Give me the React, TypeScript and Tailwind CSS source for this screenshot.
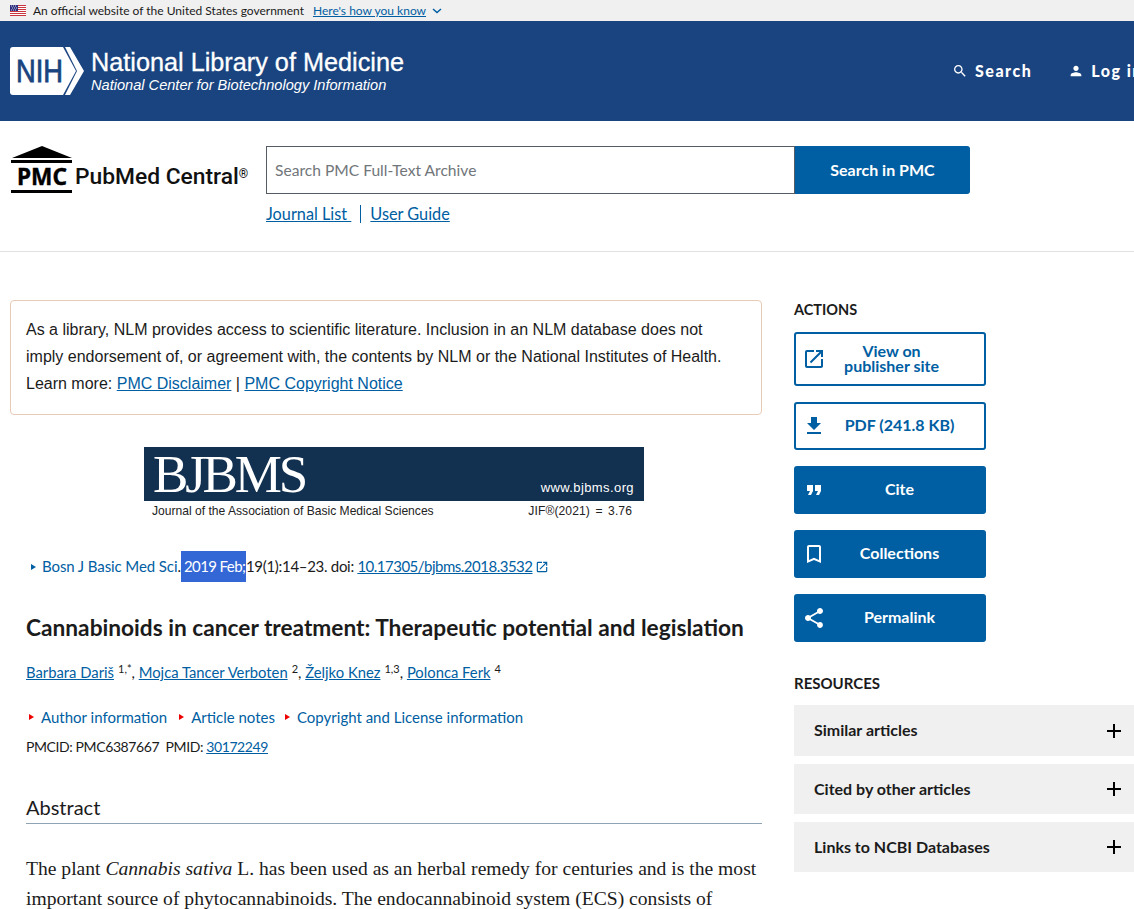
const sans = "font-['Lato',sans-serif]";

function Flag() {
  return (
    <svg width="16" height="11" viewBox="0 0 16 11" className="shrink-0">
      <rect width="16" height="11" fill="#fff" />
      <path d="M0 .5h16M0 2.5h16M0 4.5h16M0 6.5h16M0 8.5h16M0 10.5h16" stroke="#c8353f" strokeWidth="1" />
      <rect width="8" height="6" fill="#2d2f7f" />
      <path d="M1 1h1M3 1h1M5 1h1M2 3h1M4 3h1M6 3h1M1 5h1M3 5h1M5 5h1" stroke="#fff" strokeWidth=".8" />
    </svg>
  );
}

function NihLogo() {
  return (
    <svg width="74" height="48" viewBox="0 0 74 48" className="shrink-0">
      <path d="M3 0h50l13 24-13 24H3a3 3 0 0 1-3-3V3a3 3 0 0 1 3-3z" fill="#fff" />
      <path d="M55 0h5l14 24-14 24h-5l12-24z" fill="#fff" />
      <text x="6" y="35" fontSize="31" fontFamily="Liberation Sans" stroke="#1a4480" strokeWidth=".8" fill="#1a4480" textLength="47" lengthAdjust="spacingAndGlyphs">
        NIH
      </text>
    </svg>
  );
}

function PmcLogo() {
  return (
    <svg width="64" height="48" viewBox="0 0 64 48" className="shrink-0">
      <path d="M32 0 62 12H2z" fill="#000" />
      <rect x="1" y="14" width="61" height="3" fill="#000" />
      <text x="7" y="39" fontSize="24" fontWeight="700" fontFamily="Noto Sans" stroke="#000" strokeWidth=".4" fill="#000" textLength="50" lengthAdjust="spacingAndGlyphs">
        PMC
      </text>
      <rect x="1" y="44" width="61" height="3" fill="#000" />
    </svg>
  );
}

// material-style icons, 24 unit box
function Icon({ d, size = 24, className }: { d: string; size?: number; className?: string }) {
  return (
    <svg width={size} height={size} viewBox="0 0 24 24" fill="currentColor" className={className}>
      <path d={d} />
    </svg>
  );
}

const launch = "M19 19H5V5h7V3H5a2 2 0 0 0-2 2v14a2 2 0 0 0 2 2h14c1.100 0 2-.9 2-2v-7h-2v7zM14 3v2h3.590l-9.830 9.830 1.410 1.410L19 6.410V10h2V3h-7z";
const download = "M19 9h-4V3H9v6H5l7 7 7-7zM5 18v2h14v-2H5z";
const quote = "M6 17h3l2-4V7H5v6h3zm8 0h3l2-4V7h-6v6h3z";
const bookmark = "M17 3H7c-1.100 0-1.990.9-1.990 2L5 21l7-3 7 3V5c0-1.100-.9-2-2-2zm0 15-5-2.180L7 18V5h10v13z";
const share = "M18 16.080c-.76 0-1.440.3-1.960.77L8.910 12.700c.05-.23.09-.46.09-.7s-.04-.47-.09-.7l7.050-4.110c.54.5 1.250.81 2.040.81 1.660 0 3-1.340 3-3s-1.340-3-3-3-3 1.340-3 3c0 .24.040.47.090.7L8.040 9.810C7.500 9.310 6.790 9 6 9c-1.660 0-3 1.340-3 3s1.340 3 3 3c.79 0 1.500-.31 2.040-.81l7.120 4.160c-.05.21-.08.43-.08.65 0 1.610 1.310 2.920 2.920 2.920 1.610 0 2.920-1.310 2.920-2.920s-1.310-2.920-2.920-2.920z";
const search = "M15.500 14h-.79l-.28-.27C15.410 12.590 16 11.110 16 9.500 16 5.910 13.090 3 9.500 3S3 5.910 3 9.500 5.910 16 9.500 16c1.610 0 3.090-.59 4.230-1.570l.27.28v.79l5 4.990L20.490 19l-4.990-5zm-6 0C7.010 14 5 11.990 5 9.500S7.010 5 9.500 5 14 7.010 14 9.500 11.990 14 9.500 14z";
const person = "M12 12c2.210 0 4-1.790 4-4s-1.790-4-4-4-4 1.790-4 4 1.790 4 4 4zm0 2c-2.670 0-8 1.340-8 4v2h16v-2c0-2.660-5.330-4-8-4z";

function ActionButton({ icon, label, filled, tall }: { icon: string; label: React.ReactNode; filled?: boolean; tall?: boolean }) {
  return (
    <div
      className={`flex w-[192px] items-center rounded-[3px] border-2 border-[#005ea2] pl-[6px] text-[16px] font-bold leading-[15px] ${
        tall ? "h-[54px] pr-[27px]" : "h-[48px] pr-[11px]"
      } ${filled ? "bg-[#005ea2] text-white" : "bg-white text-[#005ea2]"}`}
    >
      <Icon d={icon} className="shrink-0" />
      <span className={`flex-1 text-center ${tall ? "pb-[2px]" : "pb-[4px]"}`}>{label}</span>
    </div>
  );
}

function Accordion({ label, tall }: { label: string; tall?: boolean }) {
  return (
    <div className={`flex items-center justify-between bg-[#f0f0f0] pl-[20px] pr-[8px] text-[16px] font-bold text-[#1b1b1b] ${tall ? "h-[51px]" : "h-[50px]"}`}>
      <span className={tall ? "pb-[2px]" : ""}>{label}</span>
      <svg width="24" height="24" viewBox="0 0 24 24" fill="#000">
        <path d="M19 13h-6v6h-2v-6H5v-2h6V5h2v6h6v2z" />
      </svg>
    </div>
  );
}

function RedLink({ label, className }: { label: string; className?: string }) {
  return (
    <span className={`flex items-center gap-[7px] ${className ?? ""}`}>
      <span className="h-0 w-0 border-y-[3px] border-l-[5px] border-y-transparent border-l-[#e00]" />
      <span className="text-[#005ea2]">{label}</span>
    </span>
  );
}

export default function App() {
  return (
    <div className={`h-[909px] w-[1134px] overflow-hidden bg-white text-[#1b1b1b] ${sans}`}>
      {/* Gov banner */}
      <div className="flex h-[21px] items-center bg-[#f0f0f0] pl-[10px] text-[12px]">
        <Flag />
        <span className="ml-[7px]">An official website of the United States government</span>
        <span className="ml-[9px] text-[#005ea2] underline">Here's how you know</span>
        <svg width="10" height="6" viewBox="0 0 10 6" className="ml-[6px]" fill="none" stroke="#005ea2" strokeWidth="1.500">
          <path d="m1 1 4 3.500L9 1" />
        </svg>
      </div>

      {/* NLM header */}
      <header className="flex h-[100px] items-center bg-[#1a4480] pl-[10px] text-white">
        <NihLogo />
        <div className="ml-[7px] w-[400px] shrink-0 pb-[1px] font-['Liberation_Sans',sans-serif]">
          <div className="text-[25.250px] leading-[30px] [-webkit-text-stroke:0.3px_white]">National Library of Medicine</div>
          <div className="text-[14.600px] italic leading-[17px]">National Center for Biotechnology Information</div>
        </div>
        <nav className="ml-[461px] flex shrink-0 items-center text-[16px] font-black tracking-[1.500px]">
          <Icon d={search} size={16} />
          <span className="ml-[7px]">Search</span>
          <Icon d={person} size={16} className="ml-[36px]" />
          <span className="ml-[7px] whitespace-nowrap">Log in</span>
        </nav>
      </header>

      {/* PMC search */}
      <div className="flex h-[131px] border-b border-[#dfe1e2] pl-[10px] pt-[25px]">
        <div className="flex h-[48px] w-[256px] items-center">
          <PmcLogo />
          <span className="ml-[1px] mt-[14px] whitespace-nowrap font-['Roboto',sans-serif] text-[22.800px] font-medium leading-none text-[#111]">
            PubMed Central<sup className="text-[12px]">®</sup>
          </span>
        </div>
        <div>
          <div className="flex h-[48px] w-[704px]">
            <div className="flex w-[529px] items-center border border-[#565c65] pl-[8px] pt-[1px] text-[15.600px] text-[#71767a]">
              Search PMC Full-Text Archive
            </div>
            <div className="flex flex-1 items-center justify-center rounded-r-[3px] bg-[#005ea2] pb-[1px] text-[16px] font-bold text-white">
              Search in PMC
            </div>
          </div>
          <div className="mt-[9px] flex items-center text-[16.300px] leading-[22px] text-[#005ea2]">
            <span className="underline">Journal List&nbsp;</span>
            <span className="mx-[9px] h-[18px] w-px bg-[#005ea2]" />
            <span className="underline">User Guide</span>
          </div>
        </div>
      </div>

      <div className="flex pl-[10px] pt-[48px]">
        {/* Article column */}
        <main className="w-[752px] shrink-0">
          <div className="h-[115px] rounded-[4px] border border-[#e8cbb6] bg-white pl-[15px] pr-[16px] pt-[15px] font-['Liberation_Sans',sans-serif] text-[16px] leading-[27px] text-[#1b1b1b]">
            <p className="whitespace-pre-line">
              As a library, NLM provides access to scientific literature. Inclusion in an NLM database does not{"\n"}imply endorsement of, or agreement with, the contents by NLM or the National Institutes of Health.{"\n"}Learn more: <span className="text-[#005ea2] underline">PMC Disclaimer</span> | <span className="text-[#005ea2] underline">PMC Copyright Notice</span>
            </p>
          </div>

          {/* Journal banner */}
          <div className="ml-[134px] mt-[32px] w-[500px] font-['Liberation_Sans',sans-serif]">
            <div className="flex h-[54px] items-end justify-between bg-[#12304f] pl-[9px] pr-[10px] text-white">
              <span className="font-['Liberation_Serif',serif] text-[53px] leading-[54px] tracking-[-3.200px]">BJBMS</span>
              <span className="pb-[7px] text-[13px] leading-none tracking-[.4px]">www.bjbms.org</span>
            </div>
            <div className="mt-[3px] flex justify-between pl-[8px] pr-[12px] text-[12.100px] leading-[14px] text-[#222]">
              <span>Journal of the Association of Basic Medical Sciences</span>
              <span className="[word-spacing:2px] tracking-[.1px]">JIF®(2021) = 3.76</span>
            </div>
          </div>

          {/* Citation */}
          <div className="mt-[33px] flex h-[31px] items-center whitespace-nowrap pl-[21px] text-[15px]">
            <span className="mr-[6px] h-0 w-0 border-y-[3px] border-l-[5px] border-y-transparent border-l-[#005ea2]" />
            <span className="tracking-[-.1px] text-[#005ea2]">Bosn J Basic Med Sci</span>.
            <span className="flex h-[31px] w-[65px] items-center bg-[#3367d6] pl-[3px] tracking-[-.6px] text-white">2019 Feb;</span>
            <span className="tracking-[-.3px]">19(1):14–23. doi:&nbsp;</span>
            <span className="tracking-[-.5px] text-[#005ea2] underline">10.17305/bjbms.2018.3532</span>
            <Icon d={launch} size={14} className="ml-[2px] text-[#005ea2]" />
          </div>

          <h1 className="ml-[16px] mt-[29px] whitespace-nowrap text-[22.700px] font-bold leading-[34px]">
            Cannabinoids in cancer treatment: Therapeutic potential and legislation
          </h1>

          <div className="ml-[16px] mt-[16px] text-[14.800px] leading-[22px]">
            <span className="text-[#005ea2] underline">Barbara Dariš</span>
            <sup className="ml-[4px] text-[11px]">1,*</sup>, <span className="text-[#005ea2] underline">Mojca Tancer Verboten</span>
            <sup className="ml-[4px] text-[11px]">2</sup>, <span className="text-[#005ea2] underline">Željko Knez</span>
            <sup className="ml-[4px] text-[11px]">1,3</sup>, <span className="text-[#005ea2] underline">Polonca Ferk</span>
            <sup className="ml-[4px] text-[11px]">4</sup>
          </div>

          <div className="ml-[19px] mt-[23px] flex gap-[10px] text-[15px] leading-[22px]">
            <RedLink label="Author information" />
            <RedLink label="Article notes" className="ml-[2px]" />
            <RedLink label="Copyright and License information" />
          </div>

          <div className="ml-[16px] mt-[8px] text-[14px] leading-[22px] tracking-[-.4px]">
            PMCID: PMC6387667&nbsp; PMID: <span className="text-[#005ea2] underline">30172249</span>
          </div>

          <h2 className="ml-[16px] mt-[36px] h-[30px] border-b border-[#8fa3b5] text-[20px] leading-[26px]">Abstract</h2>

          <p className="ml-[16px] mt-[30px] whitespace-pre-line font-['Liberation_Serif',serif] text-[19.600px] leading-[30px] text-[#1b1b1b]">
            The plant <em>Cannabis sativa</em> L. has been used as an herbal remedy for centuries and is the most{"\n"}important source of phytocannabinoids. The endocannabinoid system (ECS) consists of
          </p>
        </main>

        {/* Sidebar */}
        <aside className="ml-[32px] w-[340px] shrink-0">
          <div className="pt-[1px] text-[14.500px] font-bold leading-[18px]">ACTIONS</div>
          <div className="mt-[13px] flex flex-col gap-[16px]">
            <ActionButton tall icon={launch} label={<>View on<br />publisher site</>} />
            <ActionButton icon={download} label="PDF (241.8 KB)" />
            <ActionButton filled icon={quote} label="Cite" />
            <ActionButton filled icon={bookmark} label="Collections" />
            <ActionButton filled icon={share} label="Permalink" />
          </div>
          <div className="mt-[32px] text-[15px] font-bold leading-[18px]">RESOURCES</div>
          <div className="mt-[13px] flex flex-col gap-[8px]">
            <Accordion tall label="Similar articles" />
            <Accordion label="Cited by other articles" />
            <Accordion label="Links to NCBI Databases" />
          </div>
        </aside>
      </div>
    </div>
  );
}
